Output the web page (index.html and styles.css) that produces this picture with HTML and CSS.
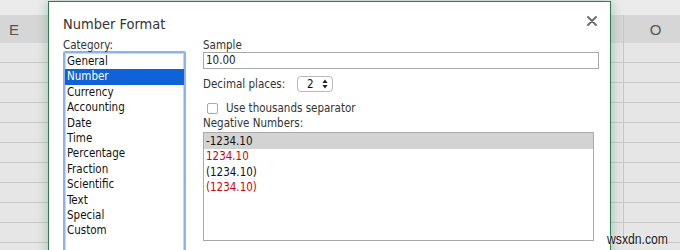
FILE: index.html
```
<!DOCTYPE html>
<html lang="en">
<head>
  <meta charset="UTF-8" />
  <title>Number Format</title>
  <link rel="stylesheet" href="styles.css">
</head>
<body>
  <div class="sheet">
    <div class="top-strip"></div>
    <div class="col-head">
      <div class="cell-left"><span class="col-e">E</span></div>
      <div class="cell-right">O</div>
    </div>
    <div class="row"><div class="cell-left"></div><div class="cell-right"></div></div>
    <div class="row"><div class="cell-left"></div><div class="cell-right"></div></div>
    <div class="row"><div class="cell-left"></div><div class="cell-right"></div></div>
    <div class="row"><div class="cell-left"></div><div class="cell-right"></div></div>
    <div class="row"><div class="cell-left"></div><div class="cell-right"></div></div>
    <div class="row"><div class="cell-left"></div><div class="cell-right"></div></div>
    <div class="row"><div class="cell-left"></div><div class="cell-right"></div></div>
    <div class="row"><div class="cell-left"></div><div class="cell-right"></div></div>
    <div class="row"><div class="cell-left"></div><div class="cell-right"></div></div>
    <div class="row"><div class="cell-left"></div><div class="cell-right"></div></div>
  </div>

  <div class="dialog">
    <div class="dialog-head">
      <h2>Number Format</h2>
      <svg class="close" width="10" height="10" viewBox="0 0 10 10">
        <path d="M1 1 L9 9 M9 1 L1 9" stroke="#6b6b6b" stroke-width="1.8" stroke-linecap="round"/>
      </svg>
    </div>
    <div class="cols">
      <div class="col-left">
        <div class="label">Category:</div>
        <ul class="category-list">
          <li>General</li>
          <li class="selected">Number</li>
          <li>Currency</li>
          <li>Accounting</li>
          <li>Date</li>
          <li>Time</li>
          <li>Percentage</li>
          <li>Fraction</li>
          <li>Scientific</li>
          <li>Text</li>
          <li>Special</li>
          <li>Custom</li>
        </ul>
      </div>
      <div class="col-right">
        <div class="label">Sample</div>
        <div class="sample-box">10.00</div>
        <div class="decimal-row">
          <span class="decimal-label">Decimal places:</span>
          <div class="spinner">
            <span>2</span>
            <svg width="6" height="10" viewBox="0 0 6 10">
              <path d="M3 0.5 L5.6 4 L0.4 4 Z M3 9.5 L5.6 6 L0.4 6 Z" fill="#222"/>
            </svg>
          </div>
        </div>
        <div class="check-row">
          <span class="checkbox"></span>
          <span>Use thousands separator</span>
        </div>
        <div class="label neg-label">Negative Numbers:</div>
        <ul class="negative-list">
          <li class="selected">-1234.10</li>
          <li class="red">1234.10</li>
          <li>(1234.10)</li>
          <li class="red">(1234.10)</li>
        </ul>
      </div>
    </div>
  </div>

  <div class="watermark">wsxdn.com</div>
</body>
</html>
```
FILE: styles.css
```
body {
  margin: 0;
  width: 680px;
  height: 250px;
  overflow: hidden;
  background: #e6e6e6;
  font-family: "DejaVu Sans Condensed", "DejaVu Sans", sans-serif;
  position: relative;
}

/* spreadsheet behind the dialog */
.sheet {
  display: flex;
  flex-direction: column;
}
.top-strip {
  height: 15px;
  background: #ebebeb;
}
.col-head {
  height: 28px;
  display: flex;
  background: #d6d6d6;
  color: #555;
  font-family: "Liberation Sans", sans-serif;
  font-size: 15px;
}
.col-head .cell-left {
  display: flex;
  align-items: center;
}
.col-e {
  width: 28px;
  text-align: center;
}
.col-head .cell-right {
  display: flex;
  align-items: center;
  justify-content: center;
  padding-left: 7px;
}
.row {
  height: 19px;
  display: flex;
  border-bottom: 1px solid #c8c8c8;
}
.cell-left {
  flex: 1;
}
.cell-right {
  width: 57px;
  box-sizing: border-box;
  border-left: 1px solid #c6c6c6;
}

/* dialog */
.dialog {
  position: absolute;
  left: 48px;
  top: 1px;
  width: 563px;
  height: 270px;
  background: #fff;
  border: 1px solid #2f7a4e;
  box-shadow: 0 0 11px rgba(50, 140, 90, 0.4);
  padding: 13px 13px 0 14px;
  box-sizing: border-box;
  color: #222;
  font-size: 11.5px;
}
.dialog-head {
  display: flex;
  justify-content: space-between;
}
h2 {
  margin: 0;
  font-size: 14.5px;
  font-weight: normal;
  line-height: 18px;
  color: #333;
}
.close {
  margin-top: 1px;
}
.cols {
  display: flex;
  gap: 17px;
  margin-top: 5px;
}
.label {
  line-height: 14px;
  color: #333;
}
.col-left {
  width: 123px;
  flex-shrink: 0;
}
.category-list {
  list-style: none;
  margin: -1px 0 0;
  padding: 1px 0 0;
  height: 210px;
  border: 2px solid #8db3ea;
  border-radius: 2px;
  box-shadow: inset 0 0 0 1px #c4d8f4;
}
.category-list li {
  line-height: 15.4px;
  padding-left: 2px;
  color: #111;
}
.category-list li.selected {
  background: #0f62d8;
  color: #fff;
}
.col-right {
  width: 396px;
  flex-shrink: 0;
}
.sample-box {
  height: 17px;
  box-sizing: border-box;
  border: 1px solid #a8a8a8;
  line-height: 15px;
  padding: 0 2px;
}
.decimal-row {
  display: flex;
  align-items: center;
  margin-top: 7px;
  height: 16px;
  color: #333;
}
.decimal-label {
  width: 94px;
}
.spinner {
  width: 36px;
  height: 16px;
  box-sizing: border-box;
  border: 1px solid #b8b8b8;
  border-radius: 4px;
  display: flex;
  align-items: center;
  justify-content: space-between;
  padding: 0 4px 0 9px;
  color: #111;
}
.check-row {
  display: flex;
  align-items: center;
  margin-top: 9px;
  height: 14px;
  color: #333;
}
.checkbox {
  width: 11px;
  height: 11px;
  box-sizing: border-box;
  border: 1px solid #a9a9a9;
  border-radius: 2px;
  margin: 0 8px 0 4px;
}
.neg-label {
  margin-top: 1px;
}
.negative-list {
  list-style: none;
  margin: 2px 0 0;
  padding: 0;
  width: 391px;
  height: 109px;
  box-sizing: border-box;
  border: 1px solid #a9a9a9;
}
.negative-list li {
  line-height: 15.6px;
  padding-left: 2px;
  color: #111;
}
.negative-list li.selected {
  background: #d3d3d3;
  line-height: 16px;
}
.negative-list li.red {
  color: #d50000;
}

.watermark {
  position: absolute;
  left: 607px;
  top: 231px;
  font-family: "Liberation Sans", sans-serif;
  font-size: 14px;
  color: #1a1a1a;
  text-shadow: 0 0 2px #fff;
  transform: scaleX(0.87);
  transform-origin: left top;
}
```
